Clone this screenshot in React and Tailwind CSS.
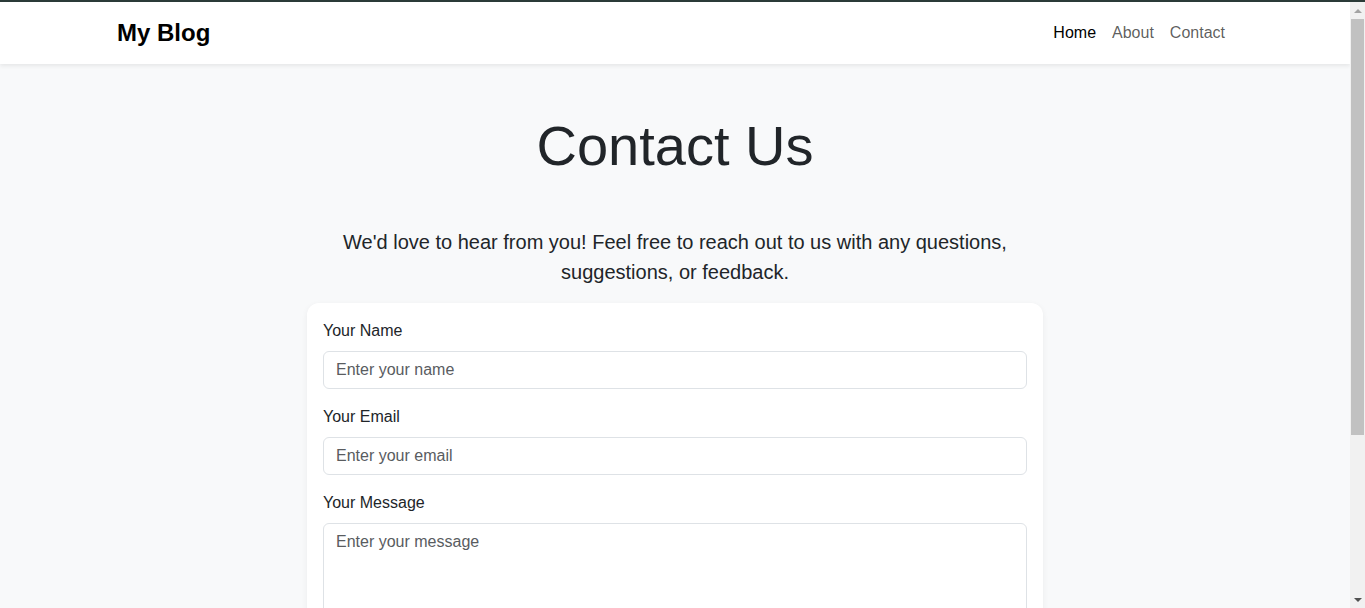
export default function App() {
  const font = { fontFamily: '"Liberation Sans", Arial, sans-serif' };
  return (
    <div className="min-h-screen bg-[#f8f9fa] text-[#212529] border-t-2 border-[#2b3b38]" style={font}>
      <div className="mr-[15px]">
        <nav className="bg-white shadow-[0_2px_4px_rgba(0,0,0,0.075)] py-2">
          <div className="max-w-[1140px] mx-auto px-3 flex items-center justify-between">
            <a className="text-[24px] leading-[36px] py-[5px] font-bold text-black">My Blog</a>
            <ul className="flex items-center text-[16px] leading-6">
              <li><a className="block px-2 py-2 text-black">Home</a></li>
              <li><a className="block px-2 py-2 text-black/65">About</a></li>
              <li><a className="block px-2 py-2 text-black/65">Contact</a></li>
            </ul>
          </div>
        </nav>
        <main className="max-w-[1140px] mx-auto px-3 pt-12 pb-12">
          <h1 className="text-center text-[56px] leading-[1.2] font-normal mb-12">Contact Us</h1>
          <div className="w-[736px] mx-auto">
            <p className="text-center text-[20px] leading-[30px] mb-4">
              We'd love to hear from you! Feel free to reach out to us with any questions, suggestions, or feedback.
            </p>
            <div className="bg-white rounded-xl shadow-[0_2px_6px_rgba(0,0,0,0.06)] p-4">
              <form>
                <div className="mb-4">
                  <label className="block text-[16px] leading-6 mb-2">Your Name</label>
                  <input
                    className="block w-full h-[38px] px-3 py-[6px] text-[16px] leading-6 border border-[#dee2e6] rounded-md bg-white placeholder:text-[#595c5f] outline-none"
                    placeholder="Enter your name"
                  />
                </div>
                <div className="mb-4">
                  <label className="block text-[16px] leading-6 mb-2">Your Email</label>
                  <input
                    className="block w-full h-[38px] px-3 py-[6px] text-[16px] leading-6 border border-[#dee2e6] rounded-md bg-white placeholder:text-[#595c5f] outline-none"
                    placeholder="Enter your email"
                  />
                </div>
                <div className="mb-4">
                  <label className="block text-[16px] leading-6 mb-2">Your Message</label>
                  <textarea
                    rows={5}
                    className="block w-full px-3 py-[6px] text-[16px] leading-6 border border-[#dee2e6] rounded-md bg-white placeholder:text-[#595c5f] outline-none resize-y"
                    placeholder="Enter your message"
                  />
                </div>
                <button type="button" className="px-3 py-[6px] text-[16px] leading-6 rounded-md bg-[#0d6efd] text-white">
                  Send Message
                </button>
              </form>
            </div>
          </div>
        </main>
      </div>
      <div className="fixed right-0 top-[2px] bottom-0 w-[15px] bg-[#f1f1f1] flex flex-col items-center">
        <div className="h-[17px] w-full flex items-center justify-center">
          <div className="w-0 h-0 border-l-[4px] border-r-[4px] border-b-[4px] border-l-transparent border-r-transparent border-b-[#a3a3a3]" />
        </div>
        <div className="w-[13px] h-[416px] bg-[#c1c1c1]" />
        <div className="flex-1" />
        <div className="h-[17px] w-full flex items-center justify-center">
          <div className="w-0 h-0 border-l-[4px] border-r-[4px] border-t-[4px] border-l-transparent border-r-transparent border-t-[#505050]" />
        </div>
      </div>
    </div>
  );
}
